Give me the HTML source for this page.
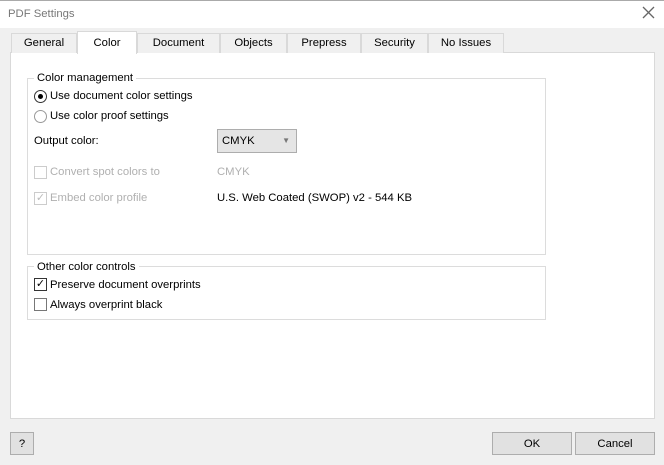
<!DOCTYPE html>
<html><head><style>
*{margin:0;padding:0;box-sizing:border-box}
body{width:664px;height:465px;background:#f0f0f0;font-family:"Liberation Sans",sans-serif;font-size:11.3px;color:#000;position:relative;overflow:hidden}
.a{position:absolute;white-space:nowrap}
.title{left:0;top:0;width:664px;height:28px;background:#fff;border-top:1px solid #aaa}
.tab{position:absolute;top:33px;height:20px;background:#f0f0f0;border:1px solid #d9d9d9;border-bottom:none;text-align:center;line-height:19px}
.panel{left:10px;top:52px;width:645px;height:367px;background:#fff;border:1px solid #d9d9d9}
.grp{position:absolute;border:1px solid #dcdcdc}
.leg{position:absolute;background:#fff;padding:0 3px;line-height:14px}
.cb{position:absolute;width:13px;height:13px;border:1px solid #333;background:#fff}
.rb{position:absolute;width:13px;height:13px;border:1px solid #333;border-radius:50%;background:#fff}
.dis{color:#b0b0b0}
.btn{position:absolute;border:1px solid #adadad;background:#e1e1e1;text-align:center;line-height:22px}
</style></head><body>
<div class="a title"></div>
<div class="a" style="left:8px;top:8px;color:#777">PDF Settings</div>
<svg class="a" style="left:642px;top:6px" width="13" height="13"><path d="M1 1L12 12M12 1L1 12" stroke="#666" stroke-width="1.3"/></svg>
<div class="a panel"></div>
<div class="tab" style="left:11px;width:66px">General</div>
<div class="tab" style="left:77px;top:31px;height:23px;width:60px;background:#fff;line-height:23px">Color</div>
<div class="tab" style="left:137px;width:83px">Document</div>
<div class="tab" style="left:220px;width:67px">Objects</div>
<div class="tab" style="left:287px;width:74px">Prepress</div>
<div class="tab" style="left:361px;width:67px">Security</div>
<div class="tab" style="left:428px;width:76px">No Issues</div>

<div class="grp" style="left:27px;top:78px;width:519px;height:177px"></div>
<div class="leg" style="left:34px;top:71px">Color management</div>
<div class="rb" style="left:34px;top:90px"><div style="position:absolute;left:3px;top:3px;width:5px;height:5px;border-radius:50%;background:#000"></div></div>
<div class="a" style="left:50px;top:90px">Use document color settings</div>
<div class="rb" style="left:34px;top:110px;border-color:#999"></div>
<div class="a" style="left:50px;top:110px">Use color proof settings</div>
<div class="a" style="left:34px;top:135px">Output color:</div>
<div class="a" style="left:217px;top:129px;width:80px;height:24px;background:#e5e5e5;border:1px solid #adadad;line-height:22px;padding-left:4px">CMYK<span style="position:absolute;right:6px;top:0;font-size:8px;color:#777">▼</span></div>
<div class="cb" style="left:34px;top:166px;border-color:#ccc"></div>
<div class="a dis" style="left:50px;top:166px">Convert spot colors to</div>
<div class="a dis" style="left:217px;top:166px">CMYK</div>
<div class="cb" style="left:34px;top:192px;border-color:#ccc;color:#bbb;font-size:11px;line-height:11px;text-align:center">✓</div>
<div class="a dis" style="left:50px;top:192px">Embed color profile</div>
<div class="a" style="left:217px;top:192px">U.S. Web Coated (SWOP) v2 - 544 KB</div>

<div class="grp" style="left:27px;top:266px;width:519px;height:54px"></div>
<div class="leg" style="left:34px;top:260px">Other color controls</div>
<div class="cb" style="left:34px;top:278px;font-size:11px;line-height:11px;text-align:center">✓</div>
<div class="a" style="left:50px;top:279px">Preserve document overprints</div>
<div class="cb" style="left:34px;top:298px;border-color:#777"></div>
<div class="a" style="left:50px;top:299px">Always overprint black</div>

<div class="btn" style="left:10px;top:432px;width:24px;height:23px">?</div>
<div class="btn" style="left:492px;top:432px;width:80px;height:23px">OK</div>
<div class="btn" style="left:575px;top:432px;width:80px;height:23px">Cancel</div>
</body></html>
